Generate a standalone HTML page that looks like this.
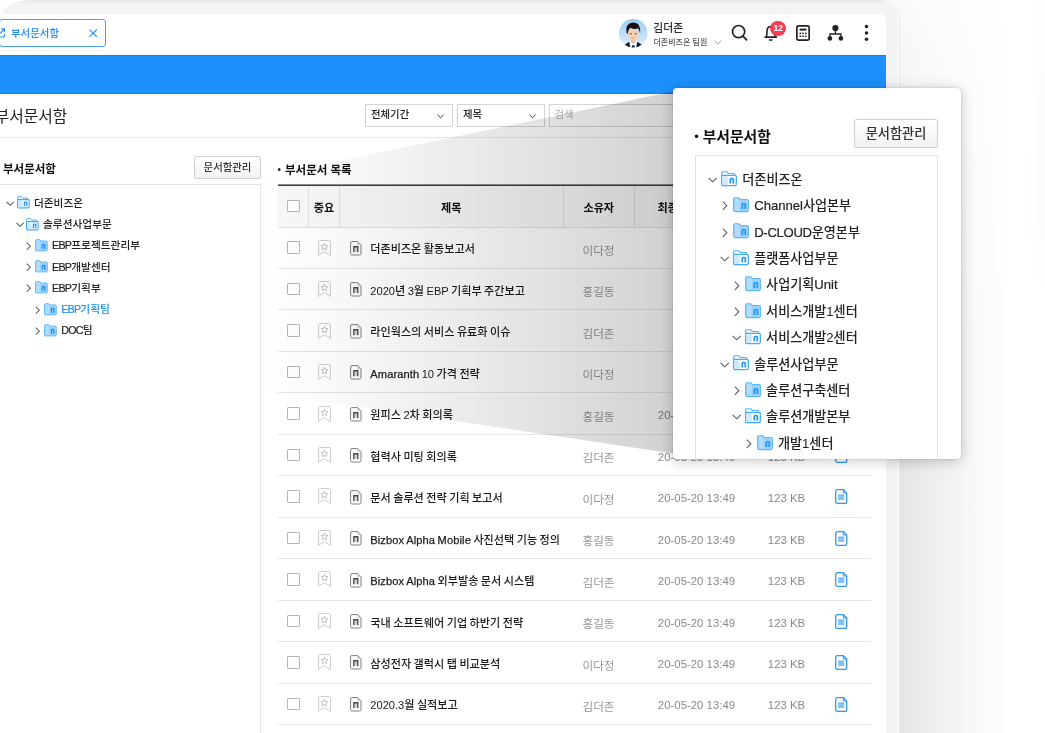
<!DOCTYPE html>
<html lang="ko">
<head>
<meta charset="utf-8">
<title>부서문서함</title>
<style>
*{box-sizing:border-box;margin:0;padding:0}
html,body{width:1045px;height:733px;overflow:hidden;background:#fff}
body{position:relative;font-family:"Liberation Sans","Noto Sans CJK KR",sans-serif;color:#222;font-size:11px}
.abs{position:absolute}
svg{display:block;overflow:visible}
/* page background */
#bg{left:0;top:0;width:1045px;height:733px;background:linear-gradient(180deg,rgba(255,255,255,0) 0,rgba(255,255,255,0) 180px,#fff 300px),linear-gradient(90deg,#fff 0,#fff 1028px,#f8f8f8 1045px)}
/* device frame */
#frameShadow{left:880px;top:0;width:165px;height:733px;background:linear-gradient(180deg,rgba(255,255,255,.8) 0,rgba(255,255,255,.55) 130px,rgba(255,255,255,0) 420px),linear-gradient(90deg,rgba(0,0,0,.105) 19px,rgba(0,0,0,.07) 50px,rgba(0,0,0,.035) 85px,rgba(0,0,0,.01) 118px,rgba(0,0,0,0) 132px)}
#frame{left:3px;top:0;width:897.2px;border-right:1px solid #e7e7e7;height:800px;background:linear-gradient(180deg,#e3e3e3 0,#eeeeee 2px,#f4f4f4 4.5px,#f3f3f3 14px);border-radius:30px 21px 0 0/14px 21px 0 0;box-shadow:inset -1.5px 0 0 #fbfbfb}
#screen{left:-10px;top:14px;width:896px;height:800px;background:#fff;border-radius:0 6.5px 0 0;overflow:hidden}
/* inside screen coordinates are offset by (-10,14): use wrapper */
#sc{left:10px;top:-14px;width:1045px;height:733px;will-change:transform}
.t{position:absolute;white-space:nowrap;line-height:1}
/* tab */
#tab{left:-1px;top:19px;width:107px;height:27.7px;border:1px solid #47a0f6;border-radius:3px}
/* blue bar */
#bar{left:-10px;top:55px;width:900px;height:38.8px;background:#1c90fb;box-shadow:inset 0 1px 0 #0c84f6, inset 0 -1px 0 #0a80f4}
/* selects */
.sel{height:23px;border:1px solid #d4d4d4;background:#fff;top:104px}
.btn{font-weight:500;border:1px solid #cfcfcf;background:linear-gradient(#fff,#f1f1f1);border-radius:2px;text-align:center;color:#333}
.line{background:#e8e8e8;height:1px}
/* tree */
.tbox{border:1px solid #e3e3e3;background:#fff}
/* table */
.row{position:absolute;left:278px;width:593px;height:41.5px;border-bottom:1px solid #e6e6e6}
.row .cb,.hcb{position:absolute;left:9px;top:13.9px;width:12.5px;height:12.5px;border:1px solid #b6b6b6;border-radius:1px;background:#fff}
.row .star{position:absolute;left:40px;top:12.1px}
.row .doc{position:absolute;left:71.8px;top:13.2px}
.row .ti{left:92.3px;top:16.7px;font-size:11.1px;font-weight:500;color:#1a1a1a;word-spacing:-.6px}
.row .ow{left:285px;width:71px;text-align:center;top:17.5px;font-size:11.6px;color:#969696}
.row .dt{left:356px;width:125px;text-align:center;top:16.7px;font-size:11.4px;color:#8a8a8a}
.row .sz{left:481px;width:55px;text-align:center;top:16.7px;font-size:11.4px;color:#8a8a8a}
.row .fi{position:absolute;left:557px;top:12.8px}
.la{letter-spacing:.1px;-webkit-text-stroke:.25px #1a1a1a}
.th{position:absolute;top:0;height:41px;font-weight:bold;font-size:11.1px;color:#111;text-align:center;line-height:44.6px;border-left:1px solid #e2e2e2}
/* popup */
#popup{left:673px;top:88px;width:287.8px;height:370.5px;background:#fff;border-radius:4px;box-shadow:0 2px 14px rgba(0,0,0,.22),0 0 1.5px rgba(0,0,0,.3);overflow:hidden}
</style>
</head>
<body>
<div id="bg" class="abs"></div>
<div id="frameShadow" class="abs"></div>
<div id="frame" class="abs"></div>
<div id="screen" class="abs"><div id="sc" class="abs">
<div id="tab" class="abs"></div>
<svg class="abs" style="left:-3.6px;top:28.4px" width="9" height="10" viewBox="0 0 9 10"><path d="M3.5 1H1.6Q.6 1 .6 2V8Q.6 9 1.6 9H7.4Q8.4 9 8.4 8V6" fill="none" stroke="#2a93f7" stroke-width="1.2"/><path d="M4 5.6L8.2 1.2M5.2 .8H8.4V4" fill="none" stroke="#2a93f7" stroke-width="1.2"/></svg>
<span class="t" style="left:11px;top:29.4px;font-size:10.45px;font-weight:500;color:#1f8df5">부서문서함</span>
<svg class="abs" style="left:89px;top:29.3px" width="8.4" height="8.4" viewBox="0 0 8.4 8.4"><path d="M.5 .5L7.9 7.9M7.9 .5L.5 7.9" stroke="#2a93f7" stroke-width="1.1"/></svg>
<svg class="abs" style="left:618.7px;top:19px" width="28.5" height="28.5" viewBox="0 0 28 28"><defs><clipPath id="av"><circle cx="14" cy="14" r="14"/></clipPath><linearGradient id="avg" x1="0" y1="0" x2="0" y2="1"><stop offset="0" stop-color="#9bcdf3"/><stop offset=".75" stop-color="#cfe6f8"/><stop offset="1" stop-color="#eef6fc"/></linearGradient></defs><circle cx="14" cy="14" r="14" fill="url(#avg)"/><g clip-path="url(#av)"><path d="M9.8 22.2L14 20.6L18.2 22.2L19 29H9Z" fill="#f5f8fc"/><path d="M3.6 28.4Q4.6 25 10.1 22.3L11.2 28.4Z" fill="#141a2c"/><path d="M24.4 28.4Q23.4 25 17.9 22.3L16.8 28.4Z" fill="#141a2c"/><path d="M12.9 25.9H15.1L15.8 28.5H12.2Z" fill="#1a2758"/><rect x="11.7" y="19" width="4.6" height="3.6" fill="#e6b996"/><path d="M11.7 22.4L14 24.6L16.3 22.4Z" fill="#e6b996"/><ellipse cx="14" cy="15" rx="5.4" ry="6.6" fill="#f3d1b6"/><path d="M7.6 14.2Q5.6 4.6 13.4 3.5Q21.8 3 20.7 14.2Q20.2 10.6 18.6 9.2Q14.6 10.6 11.4 8.6Q8.9 10 8.7 14.2Z" fill="#16110f"/><path d="M10.6 14.5H12.8M15.4 14.5H17.6" stroke="#5a4238" stroke-width=".9"/><path d="M12.3 18.3Q14 19.9 15.7 18.3Z" fill="#c77b7b"/></g></svg>
<span class="t" style="left:653.3px;top:22.9px;font-size:10.8px;font-weight:500;color:#2a2a2a">김더존</span>
<span class="t" style="left:653.5px;top:39.4px;font-size:8px;font-weight:500;color:#555">더존비즈온 팀원</span>
<div class="abs" style="left:714px;top:40px"><svg width="7.5" height="4.75" viewBox="0 0 9 5"><path d="M.6 .6L4.5 4.4L8.4 .6" fill="none" stroke="#777" stroke-width="0.9"/></svg></div>
<svg class="abs" style="left:731px;top:24px" width="18" height="18" viewBox="0 0 18 18"><circle cx="7.6" cy="7.6" r="6.1" fill="none" stroke="#222" stroke-width="1.7"/><path d="M11.9 12.1L15.6 15.9" stroke="#222" stroke-width="1.8" stroke-linecap="round"/></svg>
<svg class="abs" style="left:763px;top:24px" width="16" height="18" viewBox="0 0 16 18"><path d="M3.2 13Q4 11 4 7.4Q4 2.5 7.8 2.5Q11.6 2.5 11.6 7.4Q11.6 11 12.4 13" fill="none" stroke="#222" stroke-width="1.6"/><path d="M2 13.1H13.6" stroke="#222" stroke-width="1.6" stroke-linecap="round"/><path d="M6.5 15.9H8.9" stroke="#222" stroke-width="1.5" stroke-linecap="round"/></svg>
<div class="abs" style="left:770px;top:21px;width:16px;height:14.6px;border-radius:8px;background:#f63d52"></div>
<span class="t" style="left:770px;top:24px;width:16px;text-align:center;font-size:8.8px;font-weight:bold;color:#fff;letter-spacing:-.4px">12</span>
<svg class="abs" style="left:796px;top:25px" width="14" height="16" viewBox="0 0 14 16"><rect x=".85" y=".85" width="12.3" height="14.3" rx="1.6" fill="#fff" stroke="#222" stroke-width="1.7"/><rect x="3.6" y="3.6" width="6.8" height="2" fill="#222"/><g fill="#222"><rect x="3.5" y="7.6" width="1.6" height="1.5"/><rect x="6.2" y="7.6" width="1.6" height="1.5"/><rect x="8.9" y="7.6" width="1.6" height="1.5"/><rect x="3.5" y="10.5" width="1.6" height="1.5"/><rect x="6.2" y="10.5" width="1.6" height="1.5"/><rect x="8.9" y="10.5" width="1.6" height="1.5"/></g></svg>
<svg class="abs" style="left:827px;top:24px" width="17" height="18" viewBox="0 0 17 18"><circle cx="8.4" cy="4" r="3.1" fill="#222"/><path d="M8.4 6V10M2.9 13V10H13.9V13" fill="none" stroke="#222" stroke-width="1.3"/><circle cx="2.9" cy="14.4" r="2.3" fill="#222"/><circle cx="13.9" cy="14.4" r="2.3" fill="#222"/></svg>
<svg class="abs" style="left:864px;top:24px" width="5" height="18" viewBox="0 0 5 18"><circle cx="2.5" cy="2.6" r="1.75" fill="#222"/><circle cx="2.5" cy="8.9" r="1.75" fill="#222"/><circle cx="2.5" cy="15.2" r="1.75" fill="#222"/></svg>
<div id="bar" class="abs"></div>
<span class="t" style="left:-5.3px;top:108.7px;font-size:15.8px;color:#222">부서문서함</span>
<div class="abs line" style="left:-10px;top:136.5px;width:900px"></div>
<div class="abs sel" style="left:365px;width:88px"></div><span class="t" style="left:371px;top:110px;font-size:10.4px;font-weight:500;color:#222">전체기간</span><div class="abs" style="left:437px;top:113.5px"><svg width="7" height="4.5" viewBox="0 0 9 5"><path d="M.6 .6L4.5 4.4L8.4 .6" fill="none" stroke="#333" stroke-width="1.25"/></svg></div>
<div class="abs sel" style="left:456.5px;width:88px"></div><span class="t" style="left:463px;top:110px;font-size:10.4px;font-weight:500;color:#222">제목</span><div class="abs" style="left:529px;top:113.5px"><svg width="7" height="4.5" viewBox="0 0 9 5"><path d="M.6 .6L4.5 4.4L8.4 .6" fill="none" stroke="#333" stroke-width="1.25"/></svg></div>
<div class="abs sel" style="left:548.5px;width:200px"></div><span class="t" style="left:554.5px;top:110px;font-size:10.4px;color:#b0b0b0">검색</span>
<span class="t" style="left:3px;top:164.2px;font-size:11.5px;font-weight:bold;color:#111">부서문서함</span>
<div class="abs btn" style="left:194px;top:156px;width:67px;height:23px;font-size:10.4px;line-height:21px">문서함관리</div>
<div class="abs tbox" style="left:-10px;top:184px;width:271px;height:600px"></div>
<div class="abs" style="left:6.3px;top:200.7px"><svg width="8.3" height="5.15" viewBox="0 0 9 5"><path d="M.6 .6L4.5 4.4L8.4 .6" fill="none" stroke="#5a5a5a" stroke-width="1.1"/></svg></div><div class="abs" style="left:16.7px;top:196.4px"><svg width="12.8" height="12.6" viewBox="0 0 16 16" preserveAspectRatio="none"><path d="M.7 5V2Q.7 .8 1.9 .8H5.4Q6 .8 6.4 1.3L7.3 2.6H12.6Q13.8 2.6 13.8 3.8V5" fill="#fff" stroke="#4db1f9" stroke-width="1.25"/><path d="M1.9 4.6H14.1Q15.3 4.6 15.3 5.8V13.9Q15.3 15.1 14.1 15.1H1.9Q.7 15.1 .7 13.9V5.8Q.7 4.6 1.9 4.6Z" fill="#fff" stroke="#41abf9" stroke-width="1.3"/><rect x="1.4" y="5.6" width="5.4" height="8.8" fill="#cde8fd"/><path d="M9.3 12.9V8.7Q9.3 7.8 10.2 7.8H11.4Q12.3 7.8 12.3 8.7V12.9" fill="none" stroke="#2496f8" stroke-width="1.75"/></svg></div><span class="t" style="left:33.9px;top:197.8px;font-size:10.7px;font-weight:500;color:#222">더존비즈온</span>
<div class="abs" style="left:15.5px;top:222.1px"><svg width="8.3" height="5.15" viewBox="0 0 9 5"><path d="M.6 .6L4.5 4.4L8.4 .6" fill="none" stroke="#5a5a5a" stroke-width="1.1"/></svg></div><div class="abs" style="left:25.8px;top:217.8px"><svg width="12.8" height="12.6" viewBox="0 0 16 16" preserveAspectRatio="none"><path d="M.7 5V2Q.7 .8 1.9 .8H5.4Q6 .8 6.4 1.3L7.3 2.6H12.6Q13.8 2.6 13.8 3.8V5" fill="#fff" stroke="#4db1f9" stroke-width="1.25"/><path d="M1.9 4.6H14.1Q15.3 4.6 15.3 5.8V13.9Q15.3 15.1 14.1 15.1H1.9Q.7 15.1 .7 13.9V5.8Q.7 4.6 1.9 4.6Z" fill="#fff" stroke="#41abf9" stroke-width="1.3"/><rect x="1.4" y="5.6" width="5.4" height="8.8" fill="#cde8fd"/><path d="M9.3 12.9V8.7Q9.3 7.8 10.2 7.8H11.4Q12.3 7.8 12.3 8.7V12.9" fill="none" stroke="#2496f8" stroke-width="1.75"/></svg></div><span class="t" style="left:43.0px;top:219.2px;font-size:10.7px;font-weight:500;color:#222">솔루션사업부문</span>
<div class="abs" style="left:26.1px;top:241.8px"><svg width="5.15" height="8.3" viewBox="0 0 5 9"><path d="M.6 .6L4.4 4.5L.6 8.4" fill="none" stroke="#5a5a5a" stroke-width="1.1"/></svg></div><div class="abs" style="left:34.9px;top:239.0px"><svg width="12.8" height="12.6" viewBox="0 0 16 16" preserveAspectRatio="none"><path d="M1.9 .8H5.4Q6 .8 6.4 1.3L7.3 2.6H14.1Q15.3 2.6 15.3 3.8V13.9Q15.3 15.1 14.1 15.1H1.9Q.7 15.1 .7 13.9V2Q.7 .8 1.9 .8Z" fill="#b2dcfc" stroke="#5ab7f9" stroke-width="1.25"/><path d="M6.8 3.4H13.9Q14.6 3.4 14.6 4.1V13.7Q14.6 14.4 13.9 14.4H6.8Z" fill="#98cffb"/><path d="M9.3 12.5V7.9Q9.3 7 10.2 7H11.4Q12.3 7 12.3 7.9V12.5" fill="none" stroke="#2496f8" stroke-width="1.75"/></svg></div><span class="t" style="left:52.1px;top:240.4px;font-size:10.7px;font-weight:500;color:#222"><span style="letter-spacing:-0.75px;-webkit-text-stroke:.2px">EBP</span>프로젝트관리부</span>
<div class="abs" style="left:26.1px;top:263.1px"><svg width="5.15" height="8.3" viewBox="0 0 5 9"><path d="M.6 .6L4.4 4.5L.6 8.4" fill="none" stroke="#5a5a5a" stroke-width="1.1"/></svg></div><div class="abs" style="left:34.9px;top:260.3px"><svg width="12.8" height="12.6" viewBox="0 0 16 16" preserveAspectRatio="none"><path d="M1.9 .8H5.4Q6 .8 6.4 1.3L7.3 2.6H14.1Q15.3 2.6 15.3 3.8V13.9Q15.3 15.1 14.1 15.1H1.9Q.7 15.1 .7 13.9V2Q.7 .8 1.9 .8Z" fill="#b2dcfc" stroke="#5ab7f9" stroke-width="1.25"/><path d="M6.8 3.4H13.9Q14.6 3.4 14.6 4.1V13.7Q14.6 14.4 13.9 14.4H6.8Z" fill="#98cffb"/><path d="M9.3 12.5V7.9Q9.3 7 10.2 7H11.4Q12.3 7 12.3 7.9V12.5" fill="none" stroke="#2496f8" stroke-width="1.75"/></svg></div><span class="t" style="left:52.1px;top:261.6px;font-size:10.7px;font-weight:500;color:#222"><span style="letter-spacing:-0.75px;-webkit-text-stroke:.2px">EBP</span>개발센터</span>
<div class="abs" style="left:26.1px;top:284.2px"><svg width="5.15" height="8.3" viewBox="0 0 5 9"><path d="M.6 .6L4.4 4.5L.6 8.4" fill="none" stroke="#5a5a5a" stroke-width="1.1"/></svg></div><div class="abs" style="left:34.9px;top:281.4px"><svg width="12.8" height="12.6" viewBox="0 0 16 16" preserveAspectRatio="none"><path d="M1.9 .8H5.4Q6 .8 6.4 1.3L7.3 2.6H14.1Q15.3 2.6 15.3 3.8V13.9Q15.3 15.1 14.1 15.1H1.9Q.7 15.1 .7 13.9V2Q.7 .8 1.9 .8Z" fill="#b2dcfc" stroke="#5ab7f9" stroke-width="1.25"/><path d="M6.8 3.4H13.9Q14.6 3.4 14.6 4.1V13.7Q14.6 14.4 13.9 14.4H6.8Z" fill="#98cffb"/><path d="M9.3 12.5V7.9Q9.3 7 10.2 7H11.4Q12.3 7 12.3 7.9V12.5" fill="none" stroke="#2496f8" stroke-width="1.75"/></svg></div><span class="t" style="left:52.1px;top:282.8px;font-size:10.7px;font-weight:500;color:#222"><span style="letter-spacing:-0.75px;-webkit-text-stroke:.2px">EBP</span>기획부</span>
<div class="abs" style="left:35.2px;top:305.6px"><svg width="5.15" height="8.3" viewBox="0 0 5 9"><path d="M.6 .6L4.4 4.5L.6 8.4" fill="none" stroke="#5a5a5a" stroke-width="1.1"/></svg></div><div class="abs" style="left:44.0px;top:302.8px"><svg width="12.8" height="12.6" viewBox="0 0 16 16" preserveAspectRatio="none"><path d="M1.9 .8H5.4Q6 .8 6.4 1.3L7.3 2.6H14.1Q15.3 2.6 15.3 3.8V13.9Q15.3 15.1 14.1 15.1H1.9Q.7 15.1 .7 13.9V2Q.7 .8 1.9 .8Z" fill="#b2dcfc" stroke="#5ab7f9" stroke-width="1.25"/><path d="M6.8 3.4H13.9Q14.6 3.4 14.6 4.1V13.7Q14.6 14.4 13.9 14.4H6.8Z" fill="#98cffb"/><path d="M9.3 12.5V7.9Q9.3 7 10.2 7H11.4Q12.3 7 12.3 7.9V12.5" fill="none" stroke="#2496f8" stroke-width="1.75"/></svg></div><span class="t" style="left:61.2px;top:304.1px;font-size:10.7px;font-weight:500;color:#1f8df5"><span style="letter-spacing:-0.75px;-webkit-text-stroke:.2px">EBP</span>기획팀</span>
<div class="abs" style="left:35.2px;top:326.8px"><svg width="5.15" height="8.3" viewBox="0 0 5 9"><path d="M.6 .6L4.4 4.5L.6 8.4" fill="none" stroke="#5a5a5a" stroke-width="1.1"/></svg></div><div class="abs" style="left:44.0px;top:324.0px"><svg width="12.8" height="12.6" viewBox="0 0 16 16" preserveAspectRatio="none"><path d="M1.9 .8H5.4Q6 .8 6.4 1.3L7.3 2.6H14.1Q15.3 2.6 15.3 3.8V13.9Q15.3 15.1 14.1 15.1H1.9Q.7 15.1 .7 13.9V2Q.7 .8 1.9 .8Z" fill="#b2dcfc" stroke="#5ab7f9" stroke-width="1.25"/><path d="M6.8 3.4H13.9Q14.6 3.4 14.6 4.1V13.7Q14.6 14.4 13.9 14.4H6.8Z" fill="#98cffb"/><path d="M9.3 12.5V7.9Q9.3 7 10.2 7H11.4Q12.3 7 12.3 7.9V12.5" fill="none" stroke="#2496f8" stroke-width="1.75"/></svg></div><span class="t" style="left:61.2px;top:325.4px;font-size:10.7px;font-weight:500;color:#222"><span style="letter-spacing:-0.75px;-webkit-text-stroke:.2px">DOC</span>팀</span>
<span class="t" style="left:277.6px;top:165.3px;font-size:10px;color:#111">•</span><span class="t" style="left:285px;top:164.6px;font-size:11.5px;font-weight:bold;color:#111">부서문서 목록</span>
<div class="abs" style="left:278px;top:184px;width:593px;height:2px;background:linear-gradient(#8c8c8c 0,#8c8c8c 50%,#3f3f3f 50%,#3f3f3f 100%)"></div>
<div class="abs" style="left:278px;top:186px;width:593px;height:41.5px;background:#f8f8f8;border-bottom:1px solid #e2e2e2"><div class="hcb"></div><div class="th" style="left:30px;width:31px">중요</div><div class="th" style="left:61px;width:223.5px">제목</div><div class="th" style="left:284.5px;width:71.5px">소유자</div><div class="th" style="left:356px;width:125px;text-align:left;padding-left:22.5px">최종수정일</div><div class="th" style="left:481px;width:55px">크기</div><div class="th" style="left:536px;width:57px">파일</div></div>
<div class="row" style="top:227.50px"><div class="cb"></div><svg class="star" width="13" height="16.4" viewBox="0 0 13 16.4"><path d="M1.6 .5H11.4Q12.4 .5 12.4 1.5V15.4L6.5 11.6L.6 15.4V1.5Q.6 .5 1.6 .5Z" fill="none" stroke="#cdcdcd" stroke-width="1"/><path d="M6.5 3.3L7.5 5.4L9.8 5.7L8.1 7.3L8.5 9.6L6.5 8.5L4.5 9.6L4.9 7.3L3.2 5.7L5.5 5.4Z" fill="none" stroke="#b5b5b5" stroke-width=".9" stroke-linejoin="round"/></svg><svg class="doc" width="11.6" height="14.6" viewBox="0 0 11.6 14.6"><path d="M2 .6H7.8L11 3.8V12.6Q11 14 9.6 14H2Q.6 14 .6 12.6V2Q.6 .6 2 .6Z" fill="#fff" stroke="#7d7d7d" stroke-width="1"/><path d="M7.8 .9V3.8H10.8" fill="none" stroke="#b4b4b4" stroke-width=".8"/><rect x="4.4" y="6" width="2.8" height="4.8" fill="#cfcfcf"/><path d="M3.8 11.2V5.8H7.8V11.2" fill="none" stroke="#4a4a4a" stroke-width="1.35"/></svg><span class="t ti">더존비즈온 활동보고서</span><span class="t ow">이다정</span></div>
<div class="row" style="top:268.98px"><div class="cb"></div><svg class="star" width="13" height="16.4" viewBox="0 0 13 16.4"><path d="M1.6 .5H11.4Q12.4 .5 12.4 1.5V15.4L6.5 11.6L.6 15.4V1.5Q.6 .5 1.6 .5Z" fill="none" stroke="#cdcdcd" stroke-width="1"/><path d="M6.5 3.3L7.5 5.4L9.8 5.7L8.1 7.3L8.5 9.6L6.5 8.5L4.5 9.6L4.9 7.3L3.2 5.7L5.5 5.4Z" fill="none" stroke="#b5b5b5" stroke-width=".9" stroke-linejoin="round"/></svg><svg class="doc" width="11.6" height="14.6" viewBox="0 0 11.6 14.6"><path d="M2 .6H7.8L11 3.8V12.6Q11 14 9.6 14H2Q.6 14 .6 12.6V2Q.6 .6 2 .6Z" fill="#fff" stroke="#7d7d7d" stroke-width="1"/><path d="M7.8 .9V3.8H10.8" fill="none" stroke="#b4b4b4" stroke-width=".8"/><rect x="4.4" y="6" width="2.8" height="4.8" fill="#cfcfcf"/><path d="M3.8 11.2V5.8H7.8V11.2" fill="none" stroke="#4a4a4a" stroke-width="1.35"/></svg><span class="t ti">2020년 3월 EBP 기획부 주간보고</span><span class="t ow">홍길동</span></div>
<div class="row" style="top:310.46px"><div class="cb"></div><svg class="star" width="13" height="16.4" viewBox="0 0 13 16.4"><path d="M1.6 .5H11.4Q12.4 .5 12.4 1.5V15.4L6.5 11.6L.6 15.4V1.5Q.6 .5 1.6 .5Z" fill="none" stroke="#cdcdcd" stroke-width="1"/><path d="M6.5 3.3L7.5 5.4L9.8 5.7L8.1 7.3L8.5 9.6L6.5 8.5L4.5 9.6L4.9 7.3L3.2 5.7L5.5 5.4Z" fill="none" stroke="#b5b5b5" stroke-width=".9" stroke-linejoin="round"/></svg><svg class="doc" width="11.6" height="14.6" viewBox="0 0 11.6 14.6"><path d="M2 .6H7.8L11 3.8V12.6Q11 14 9.6 14H2Q.6 14 .6 12.6V2Q.6 .6 2 .6Z" fill="#fff" stroke="#7d7d7d" stroke-width="1"/><path d="M7.8 .9V3.8H10.8" fill="none" stroke="#b4b4b4" stroke-width=".8"/><rect x="4.4" y="6" width="2.8" height="4.8" fill="#cfcfcf"/><path d="M3.8 11.2V5.8H7.8V11.2" fill="none" stroke="#4a4a4a" stroke-width="1.35"/></svg><span class="t ti">라인웍스의 서비스 유료화 이슈</span><span class="t ow">김더존</span></div>
<div class="row" style="top:351.94px"><div class="cb"></div><svg class="star" width="13" height="16.4" viewBox="0 0 13 16.4"><path d="M1.6 .5H11.4Q12.4 .5 12.4 1.5V15.4L6.5 11.6L.6 15.4V1.5Q.6 .5 1.6 .5Z" fill="none" stroke="#cdcdcd" stroke-width="1"/><path d="M6.5 3.3L7.5 5.4L9.8 5.7L8.1 7.3L8.5 9.6L6.5 8.5L4.5 9.6L4.9 7.3L3.2 5.7L5.5 5.4Z" fill="none" stroke="#b5b5b5" stroke-width=".9" stroke-linejoin="round"/></svg><svg class="doc" width="11.6" height="14.6" viewBox="0 0 11.6 14.6"><path d="M2 .6H7.8L11 3.8V12.6Q11 14 9.6 14H2Q.6 14 .6 12.6V2Q.6 .6 2 .6Z" fill="#fff" stroke="#7d7d7d" stroke-width="1"/><path d="M7.8 .9V3.8H10.8" fill="none" stroke="#b4b4b4" stroke-width=".8"/><rect x="4.4" y="6" width="2.8" height="4.8" fill="#cfcfcf"/><path d="M3.8 11.2V5.8H7.8V11.2" fill="none" stroke="#4a4a4a" stroke-width="1.35"/></svg><span class="t ti"><span class="la">Amaranth</span> 10 가격 전략</span><span class="t ow">이다정</span></div>
<div class="row" style="top:393.42px"><div class="cb"></div><svg class="star" width="13" height="16.4" viewBox="0 0 13 16.4"><path d="M1.6 .5H11.4Q12.4 .5 12.4 1.5V15.4L6.5 11.6L.6 15.4V1.5Q.6 .5 1.6 .5Z" fill="none" stroke="#cdcdcd" stroke-width="1"/><path d="M6.5 3.3L7.5 5.4L9.8 5.7L8.1 7.3L8.5 9.6L6.5 8.5L4.5 9.6L4.9 7.3L3.2 5.7L5.5 5.4Z" fill="none" stroke="#b5b5b5" stroke-width=".9" stroke-linejoin="round"/></svg><svg class="doc" width="11.6" height="14.6" viewBox="0 0 11.6 14.6"><path d="M2 .6H7.8L11 3.8V12.6Q11 14 9.6 14H2Q.6 14 .6 12.6V2Q.6 .6 2 .6Z" fill="#fff" stroke="#7d7d7d" stroke-width="1"/><path d="M7.8 .9V3.8H10.8" fill="none" stroke="#b4b4b4" stroke-width=".8"/><rect x="4.4" y="6" width="2.8" height="4.8" fill="#cfcfcf"/><path d="M3.8 11.2V5.8H7.8V11.2" fill="none" stroke="#4a4a4a" stroke-width="1.35"/></svg><span class="t ti">원피스 2차 회의록</span><span class="t ow">홍길동</span><span class="t dt">20-05-20 13:49</span><span class="t sz">123 KB</span><svg class="fi" width="12.4" height="15" viewBox="0 0 12.4 15"><path d="M2.6 .7H8.3L11.7 4.1V12.4Q11.7 14.3 9.8 14.3H2.6Q.7 14.3 .7 12.4V2.6Q.7 .7 2.6 .7Z" fill="#fff" stroke="#2f98f8" stroke-width="1.3"/><path d="M8.3 .9V4.1H11.5" fill="none" stroke="#2f98f8" stroke-width="1"/><rect x="3.2" y="5.4" width="6" height="5.6" fill="#a9d4fc"/><path d="M3.2 6.3H9.2M3.2 8.2H9.2M3.2 10.1H9.2" stroke="#5fb0fa" stroke-width="1"/></svg></div>
<div class="row" style="top:434.90px"><div class="cb"></div><svg class="star" width="13" height="16.4" viewBox="0 0 13 16.4"><path d="M1.6 .5H11.4Q12.4 .5 12.4 1.5V15.4L6.5 11.6L.6 15.4V1.5Q.6 .5 1.6 .5Z" fill="none" stroke="#cdcdcd" stroke-width="1"/><path d="M6.5 3.3L7.5 5.4L9.8 5.7L8.1 7.3L8.5 9.6L6.5 8.5L4.5 9.6L4.9 7.3L3.2 5.7L5.5 5.4Z" fill="none" stroke="#b5b5b5" stroke-width=".9" stroke-linejoin="round"/></svg><svg class="doc" width="11.6" height="14.6" viewBox="0 0 11.6 14.6"><path d="M2 .6H7.8L11 3.8V12.6Q11 14 9.6 14H2Q.6 14 .6 12.6V2Q.6 .6 2 .6Z" fill="#fff" stroke="#7d7d7d" stroke-width="1"/><path d="M7.8 .9V3.8H10.8" fill="none" stroke="#b4b4b4" stroke-width=".8"/><rect x="4.4" y="6" width="2.8" height="4.8" fill="#cfcfcf"/><path d="M3.8 11.2V5.8H7.8V11.2" fill="none" stroke="#4a4a4a" stroke-width="1.35"/></svg><span class="t ti">협력사 미팅 회의록</span><span class="t ow">김더존</span><span class="t dt">20-05-20 13:49</span><span class="t sz">123 KB</span><svg class="fi" width="12.4" height="15" viewBox="0 0 12.4 15"><path d="M2.6 .7H8.3L11.7 4.1V12.4Q11.7 14.3 9.8 14.3H2.6Q.7 14.3 .7 12.4V2.6Q.7 .7 2.6 .7Z" fill="#fff" stroke="#2f98f8" stroke-width="1.3"/><path d="M8.3 .9V4.1H11.5" fill="none" stroke="#2f98f8" stroke-width="1"/><rect x="3.2" y="5.4" width="6" height="5.6" fill="#a9d4fc"/><path d="M3.2 6.3H9.2M3.2 8.2H9.2M3.2 10.1H9.2" stroke="#5fb0fa" stroke-width="1"/></svg></div>
<div class="row" style="top:476.38px"><div class="cb"></div><svg class="star" width="13" height="16.4" viewBox="0 0 13 16.4"><path d="M1.6 .5H11.4Q12.4 .5 12.4 1.5V15.4L6.5 11.6L.6 15.4V1.5Q.6 .5 1.6 .5Z" fill="none" stroke="#cdcdcd" stroke-width="1"/><path d="M6.5 3.3L7.5 5.4L9.8 5.7L8.1 7.3L8.5 9.6L6.5 8.5L4.5 9.6L4.9 7.3L3.2 5.7L5.5 5.4Z" fill="none" stroke="#b5b5b5" stroke-width=".9" stroke-linejoin="round"/></svg><svg class="doc" width="11.6" height="14.6" viewBox="0 0 11.6 14.6"><path d="M2 .6H7.8L11 3.8V12.6Q11 14 9.6 14H2Q.6 14 .6 12.6V2Q.6 .6 2 .6Z" fill="#fff" stroke="#7d7d7d" stroke-width="1"/><path d="M7.8 .9V3.8H10.8" fill="none" stroke="#b4b4b4" stroke-width=".8"/><rect x="4.4" y="6" width="2.8" height="4.8" fill="#cfcfcf"/><path d="M3.8 11.2V5.8H7.8V11.2" fill="none" stroke="#4a4a4a" stroke-width="1.35"/></svg><span class="t ti">문서 솔루션 전략 기획 보고서</span><span class="t ow">이다정</span><span class="t dt">20-05-20 13:49</span><span class="t sz">123 KB</span><svg class="fi" width="12.4" height="15" viewBox="0 0 12.4 15"><path d="M2.6 .7H8.3L11.7 4.1V12.4Q11.7 14.3 9.8 14.3H2.6Q.7 14.3 .7 12.4V2.6Q.7 .7 2.6 .7Z" fill="#fff" stroke="#2f98f8" stroke-width="1.3"/><path d="M8.3 .9V4.1H11.5" fill="none" stroke="#2f98f8" stroke-width="1"/><rect x="3.2" y="5.4" width="6" height="5.6" fill="#a9d4fc"/><path d="M3.2 6.3H9.2M3.2 8.2H9.2M3.2 10.1H9.2" stroke="#5fb0fa" stroke-width="1"/></svg></div>
<div class="row" style="top:517.86px"><div class="cb"></div><svg class="star" width="13" height="16.4" viewBox="0 0 13 16.4"><path d="M1.6 .5H11.4Q12.4 .5 12.4 1.5V15.4L6.5 11.6L.6 15.4V1.5Q.6 .5 1.6 .5Z" fill="none" stroke="#cdcdcd" stroke-width="1"/><path d="M6.5 3.3L7.5 5.4L9.8 5.7L8.1 7.3L8.5 9.6L6.5 8.5L4.5 9.6L4.9 7.3L3.2 5.7L5.5 5.4Z" fill="none" stroke="#b5b5b5" stroke-width=".9" stroke-linejoin="round"/></svg><svg class="doc" width="11.6" height="14.6" viewBox="0 0 11.6 14.6"><path d="M2 .6H7.8L11 3.8V12.6Q11 14 9.6 14H2Q.6 14 .6 12.6V2Q.6 .6 2 .6Z" fill="#fff" stroke="#7d7d7d" stroke-width="1"/><path d="M7.8 .9V3.8H10.8" fill="none" stroke="#b4b4b4" stroke-width=".8"/><rect x="4.4" y="6" width="2.8" height="4.8" fill="#cfcfcf"/><path d="M3.8 11.2V5.8H7.8V11.2" fill="none" stroke="#4a4a4a" stroke-width="1.35"/></svg><span class="t ti"><span class="la">Bizbox Alpha Mobile</span> 사진선택 기능 정의</span><span class="t ow">홍길동</span><span class="t dt">20-05-20 13:49</span><span class="t sz">123 KB</span><svg class="fi" width="12.4" height="15" viewBox="0 0 12.4 15"><path d="M2.6 .7H8.3L11.7 4.1V12.4Q11.7 14.3 9.8 14.3H2.6Q.7 14.3 .7 12.4V2.6Q.7 .7 2.6 .7Z" fill="#fff" stroke="#2f98f8" stroke-width="1.3"/><path d="M8.3 .9V4.1H11.5" fill="none" stroke="#2f98f8" stroke-width="1"/><rect x="3.2" y="5.4" width="6" height="5.6" fill="#a9d4fc"/><path d="M3.2 6.3H9.2M3.2 8.2H9.2M3.2 10.1H9.2" stroke="#5fb0fa" stroke-width="1"/></svg></div>
<div class="row" style="top:559.34px"><div class="cb"></div><svg class="star" width="13" height="16.4" viewBox="0 0 13 16.4"><path d="M1.6 .5H11.4Q12.4 .5 12.4 1.5V15.4L6.5 11.6L.6 15.4V1.5Q.6 .5 1.6 .5Z" fill="none" stroke="#cdcdcd" stroke-width="1"/><path d="M6.5 3.3L7.5 5.4L9.8 5.7L8.1 7.3L8.5 9.6L6.5 8.5L4.5 9.6L4.9 7.3L3.2 5.7L5.5 5.4Z" fill="none" stroke="#b5b5b5" stroke-width=".9" stroke-linejoin="round"/></svg><svg class="doc" width="11.6" height="14.6" viewBox="0 0 11.6 14.6"><path d="M2 .6H7.8L11 3.8V12.6Q11 14 9.6 14H2Q.6 14 .6 12.6V2Q.6 .6 2 .6Z" fill="#fff" stroke="#7d7d7d" stroke-width="1"/><path d="M7.8 .9V3.8H10.8" fill="none" stroke="#b4b4b4" stroke-width=".8"/><rect x="4.4" y="6" width="2.8" height="4.8" fill="#cfcfcf"/><path d="M3.8 11.2V5.8H7.8V11.2" fill="none" stroke="#4a4a4a" stroke-width="1.35"/></svg><span class="t ti"><span class="la">Bizbox Alpha</span> 외부발송 문서 시스템</span><span class="t ow">김더존</span><span class="t dt">20-05-20 13:49</span><span class="t sz">123 KB</span><svg class="fi" width="12.4" height="15" viewBox="0 0 12.4 15"><path d="M2.6 .7H8.3L11.7 4.1V12.4Q11.7 14.3 9.8 14.3H2.6Q.7 14.3 .7 12.4V2.6Q.7 .7 2.6 .7Z" fill="#fff" stroke="#2f98f8" stroke-width="1.3"/><path d="M8.3 .9V4.1H11.5" fill="none" stroke="#2f98f8" stroke-width="1"/><rect x="3.2" y="5.4" width="6" height="5.6" fill="#a9d4fc"/><path d="M3.2 6.3H9.2M3.2 8.2H9.2M3.2 10.1H9.2" stroke="#5fb0fa" stroke-width="1"/></svg></div>
<div class="row" style="top:600.82px"><div class="cb"></div><svg class="star" width="13" height="16.4" viewBox="0 0 13 16.4"><path d="M1.6 .5H11.4Q12.4 .5 12.4 1.5V15.4L6.5 11.6L.6 15.4V1.5Q.6 .5 1.6 .5Z" fill="none" stroke="#cdcdcd" stroke-width="1"/><path d="M6.5 3.3L7.5 5.4L9.8 5.7L8.1 7.3L8.5 9.6L6.5 8.5L4.5 9.6L4.9 7.3L3.2 5.7L5.5 5.4Z" fill="none" stroke="#b5b5b5" stroke-width=".9" stroke-linejoin="round"/></svg><svg class="doc" width="11.6" height="14.6" viewBox="0 0 11.6 14.6"><path d="M2 .6H7.8L11 3.8V12.6Q11 14 9.6 14H2Q.6 14 .6 12.6V2Q.6 .6 2 .6Z" fill="#fff" stroke="#7d7d7d" stroke-width="1"/><path d="M7.8 .9V3.8H10.8" fill="none" stroke="#b4b4b4" stroke-width=".8"/><rect x="4.4" y="6" width="2.8" height="4.8" fill="#cfcfcf"/><path d="M3.8 11.2V5.8H7.8V11.2" fill="none" stroke="#4a4a4a" stroke-width="1.35"/></svg><span class="t ti">국내 소프트웨어 기업 하반기 전략</span><span class="t ow">홍길동</span><span class="t dt">20-05-20 13:49</span><span class="t sz">123 KB</span><svg class="fi" width="12.4" height="15" viewBox="0 0 12.4 15"><path d="M2.6 .7H8.3L11.7 4.1V12.4Q11.7 14.3 9.8 14.3H2.6Q.7 14.3 .7 12.4V2.6Q.7 .7 2.6 .7Z" fill="#fff" stroke="#2f98f8" stroke-width="1.3"/><path d="M8.3 .9V4.1H11.5" fill="none" stroke="#2f98f8" stroke-width="1"/><rect x="3.2" y="5.4" width="6" height="5.6" fill="#a9d4fc"/><path d="M3.2 6.3H9.2M3.2 8.2H9.2M3.2 10.1H9.2" stroke="#5fb0fa" stroke-width="1"/></svg></div>
<div class="row" style="top:642.30px"><div class="cb"></div><svg class="star" width="13" height="16.4" viewBox="0 0 13 16.4"><path d="M1.6 .5H11.4Q12.4 .5 12.4 1.5V15.4L6.5 11.6L.6 15.4V1.5Q.6 .5 1.6 .5Z" fill="none" stroke="#cdcdcd" stroke-width="1"/><path d="M6.5 3.3L7.5 5.4L9.8 5.7L8.1 7.3L8.5 9.6L6.5 8.5L4.5 9.6L4.9 7.3L3.2 5.7L5.5 5.4Z" fill="none" stroke="#b5b5b5" stroke-width=".9" stroke-linejoin="round"/></svg><svg class="doc" width="11.6" height="14.6" viewBox="0 0 11.6 14.6"><path d="M2 .6H7.8L11 3.8V12.6Q11 14 9.6 14H2Q.6 14 .6 12.6V2Q.6 .6 2 .6Z" fill="#fff" stroke="#7d7d7d" stroke-width="1"/><path d="M7.8 .9V3.8H10.8" fill="none" stroke="#b4b4b4" stroke-width=".8"/><rect x="4.4" y="6" width="2.8" height="4.8" fill="#cfcfcf"/><path d="M3.8 11.2V5.8H7.8V11.2" fill="none" stroke="#4a4a4a" stroke-width="1.35"/></svg><span class="t ti">삼성전자 갤럭시 탭 비교분석</span><span class="t ow">이다정</span><span class="t dt">20-05-20 13:49</span><span class="t sz">123 KB</span><svg class="fi" width="12.4" height="15" viewBox="0 0 12.4 15"><path d="M2.6 .7H8.3L11.7 4.1V12.4Q11.7 14.3 9.8 14.3H2.6Q.7 14.3 .7 12.4V2.6Q.7 .7 2.6 .7Z" fill="#fff" stroke="#2f98f8" stroke-width="1.3"/><path d="M8.3 .9V4.1H11.5" fill="none" stroke="#2f98f8" stroke-width="1"/><rect x="3.2" y="5.4" width="6" height="5.6" fill="#a9d4fc"/><path d="M3.2 6.3H9.2M3.2 8.2H9.2M3.2 10.1H9.2" stroke="#5fb0fa" stroke-width="1"/></svg></div>
<div class="row" style="top:683.78px"><div class="cb"></div><svg class="star" width="13" height="16.4" viewBox="0 0 13 16.4"><path d="M1.6 .5H11.4Q12.4 .5 12.4 1.5V15.4L6.5 11.6L.6 15.4V1.5Q.6 .5 1.6 .5Z" fill="none" stroke="#cdcdcd" stroke-width="1"/><path d="M6.5 3.3L7.5 5.4L9.8 5.7L8.1 7.3L8.5 9.6L6.5 8.5L4.5 9.6L4.9 7.3L3.2 5.7L5.5 5.4Z" fill="none" stroke="#b5b5b5" stroke-width=".9" stroke-linejoin="round"/></svg><svg class="doc" width="11.6" height="14.6" viewBox="0 0 11.6 14.6"><path d="M2 .6H7.8L11 3.8V12.6Q11 14 9.6 14H2Q.6 14 .6 12.6V2Q.6 .6 2 .6Z" fill="#fff" stroke="#7d7d7d" stroke-width="1"/><path d="M7.8 .9V3.8H10.8" fill="none" stroke="#b4b4b4" stroke-width=".8"/><rect x="4.4" y="6" width="2.8" height="4.8" fill="#cfcfcf"/><path d="M3.8 11.2V5.8H7.8V11.2" fill="none" stroke="#4a4a4a" stroke-width="1.35"/></svg><span class="t ti">2020.3월 실적보고</span><span class="t ow">김더존</span><span class="t dt">20-05-20 13:49</span><span class="t sz">123 KB</span><svg class="fi" width="12.4" height="15" viewBox="0 0 12.4 15"><path d="M2.6 .7H8.3L11.7 4.1V12.4Q11.7 14.3 9.8 14.3H2.6Q.7 14.3 .7 12.4V2.6Q.7 .7 2.6 .7Z" fill="#fff" stroke="#2f98f8" stroke-width="1.3"/><path d="M8.3 .9V4.1H11.5" fill="none" stroke="#2f98f8" stroke-width="1"/><rect x="3.2" y="5.4" width="6" height="5.6" fill="#a9d4fc"/><path d="M3.2 6.3H9.2M3.2 8.2H9.2M3.2 10.1H9.2" stroke="#5fb0fa" stroke-width="1"/></svg></div>
<div class="row" style="top:725.26px"></div>
</div></div>
<div class="abs" style="left:262px;top:85px;width:411px;height:380px;background:linear-gradient(90deg,rgba(0,0,0,0) 0,rgba(0,0,0,.015) 12%,rgba(0,0,0,.05) 34%,rgba(0,0,0,.115) 68%,rgba(0,0,0,.18) 100%);clip-path:polygon(0 92px,100% 6.5px,100% 368.5px,0 307px)"></div>
<div id="popup" class="abs">
<span class="t" style="left:21.2px;top:42.2px;font-size:13px;color:#111">•</span><span class="t" style="left:29.7px;top:41.5px;font-size:14.8px;font-weight:bold;color:#111">부서문서함</span>
<div class="abs btn" style="left:181px;top:31px;width:84px;height:29px;font-size:13.2px;line-height:27px;border-radius:2.5px">문서함관리</div>
<div class="abs tbox" style="left:22px;top:67px;width:243px;height:400px"></div>
<div class="abs" style="left:35.0px;top:88.8px"><svg width="9.4" height="5.7" viewBox="0 0 9 5"><path d="M.6 .6L4.5 4.4L8.4 .6" fill="none" stroke="#5a5a5a" stroke-width="1.0"/></svg></div><div class="abs" style="left:48.2px;top:82.6px"><svg width="16" height="15.4" viewBox="0 0 16 16" preserveAspectRatio="none"><path d="M.7 5V2Q.7 .8 1.9 .8H5.4Q6 .8 6.4 1.3L7.3 2.6H12.6Q13.8 2.6 13.8 3.8V5" fill="#fff" stroke="#4db1f9" stroke-width="1.25"/><path d="M1.9 4.6H14.1Q15.3 4.6 15.3 5.8V13.9Q15.3 15.1 14.1 15.1H1.9Q.7 15.1 .7 13.9V5.8Q.7 4.6 1.9 4.6Z" fill="#fff" stroke="#41abf9" stroke-width="1.3"/><rect x="1.4" y="5.6" width="5.4" height="8.8" fill="#cde8fd"/><path d="M9.3 12.9V8.7Q9.3 7.8 10.2 7.8H11.4Q12.3 7.8 12.3 8.7V12.9" fill="none" stroke="#2496f8" stroke-width="1.75"/></svg></div><span class="t" style="left:69.3px;top:84.8px;font-size:13.1px;font-weight:500;color:#222">더존비즈온</span>
<div class="abs" style="left:48.8px;top:113.3px"><svg width="5.7" height="9.4" viewBox="0 0 5 9"><path d="M.6 .6L4.4 4.5L.6 8.4" fill="none" stroke="#5a5a5a" stroke-width="1.0"/></svg></div><div class="abs" style="left:60.1px;top:109.0px"><svg width="16" height="15.4" viewBox="0 0 16 16" preserveAspectRatio="none"><path d="M1.9 .8H5.4Q6 .8 6.4 1.3L7.3 2.6H14.1Q15.3 2.6 15.3 3.8V13.9Q15.3 15.1 14.1 15.1H1.9Q.7 15.1 .7 13.9V2Q.7 .8 1.9 .8Z" fill="#b2dcfc" stroke="#5ab7f9" stroke-width="1.25"/><path d="M6.8 3.4H13.9Q14.6 3.4 14.6 4.1V13.7Q14.6 14.4 13.9 14.4H6.8Z" fill="#98cffb"/><path d="M9.3 12.5V7.9Q9.3 7 10.2 7H11.4Q12.3 7 12.3 7.9V12.5" fill="none" stroke="#2496f8" stroke-width="1.75"/></svg></div><span class="t" style="left:81.2px;top:111.2px;font-size:13.1px;font-weight:500;color:#222"><span style="-webkit-text-stroke:.2px">Channel</span>사업본부</span>
<div class="abs" style="left:48.8px;top:139.7px"><svg width="5.7" height="9.4" viewBox="0 0 5 9"><path d="M.6 .6L4.4 4.5L.6 8.4" fill="none" stroke="#5a5a5a" stroke-width="1.0"/></svg></div><div class="abs" style="left:60.1px;top:135.4px"><svg width="16" height="15.4" viewBox="0 0 16 16" preserveAspectRatio="none"><path d="M1.9 .8H5.4Q6 .8 6.4 1.3L7.3 2.6H14.1Q15.3 2.6 15.3 3.8V13.9Q15.3 15.1 14.1 15.1H1.9Q.7 15.1 .7 13.9V2Q.7 .8 1.9 .8Z" fill="#b2dcfc" stroke="#5ab7f9" stroke-width="1.25"/><path d="M6.8 3.4H13.9Q14.6 3.4 14.6 4.1V13.7Q14.6 14.4 13.9 14.4H6.8Z" fill="#98cffb"/><path d="M9.3 12.5V7.9Q9.3 7 10.2 7H11.4Q12.3 7 12.3 7.9V12.5" fill="none" stroke="#2496f8" stroke-width="1.75"/></svg></div><span class="t" style="left:81.2px;top:137.6px;font-size:13.1px;font-weight:500;color:#222"><span style="letter-spacing:-0.3px;-webkit-text-stroke:.2px">D-CLOUD</span>운영본부</span>
<div class="abs" style="left:46.9px;top:167.9px"><svg width="9.4" height="5.7" viewBox="0 0 9 5"><path d="M.6 .6L4.5 4.4L8.4 .6" fill="none" stroke="#5a5a5a" stroke-width="1.0"/></svg></div><div class="abs" style="left:60.1px;top:161.8px"><svg width="16" height="15.4" viewBox="0 0 16 16" preserveAspectRatio="none"><path d="M.7 5V2Q.7 .8 1.9 .8H5.4Q6 .8 6.4 1.3L7.3 2.6H12.6Q13.8 2.6 13.8 3.8V5" fill="#fff" stroke="#4db1f9" stroke-width="1.25"/><path d="M1.9 4.6H14.1Q15.3 4.6 15.3 5.8V13.9Q15.3 15.1 14.1 15.1H1.9Q.7 15.1 .7 13.9V5.8Q.7 4.6 1.9 4.6Z" fill="#fff" stroke="#41abf9" stroke-width="1.3"/><rect x="1.4" y="5.6" width="5.4" height="8.8" fill="#cde8fd"/><path d="M9.3 12.9V8.7Q9.3 7.8 10.2 7.8H11.4Q12.3 7.8 12.3 8.7V12.9" fill="none" stroke="#2496f8" stroke-width="1.75"/></svg></div><span class="t" style="left:81.2px;top:164.0px;font-size:13.1px;font-weight:500;color:#222">플랫폼사업부문</span>
<div class="abs" style="left:60.7px;top:192.5px"><svg width="5.7" height="9.4" viewBox="0 0 5 9"><path d="M.6 .6L4.4 4.5L.6 8.4" fill="none" stroke="#5a5a5a" stroke-width="1.0"/></svg></div><div class="abs" style="left:72.0px;top:188.2px"><svg width="16" height="15.4" viewBox="0 0 16 16" preserveAspectRatio="none"><path d="M1.9 .8H5.4Q6 .8 6.4 1.3L7.3 2.6H14.1Q15.3 2.6 15.3 3.8V13.9Q15.3 15.1 14.1 15.1H1.9Q.7 15.1 .7 13.9V2Q.7 .8 1.9 .8Z" fill="#b2dcfc" stroke="#5ab7f9" stroke-width="1.25"/><path d="M6.8 3.4H13.9Q14.6 3.4 14.6 4.1V13.7Q14.6 14.4 13.9 14.4H6.8Z" fill="#98cffb"/><path d="M9.3 12.5V7.9Q9.3 7 10.2 7H11.4Q12.3 7 12.3 7.9V12.5" fill="none" stroke="#2496f8" stroke-width="1.75"/></svg></div><span class="t" style="left:93.1px;top:190.4px;font-size:13.1px;font-weight:500;color:#222">사업기획<span style="-webkit-text-stroke:.2px">Unit</span></span>
<div class="abs" style="left:60.7px;top:218.9px"><svg width="5.7" height="9.4" viewBox="0 0 5 9"><path d="M.6 .6L4.4 4.5L.6 8.4" fill="none" stroke="#5a5a5a" stroke-width="1.0"/></svg></div><div class="abs" style="left:72.0px;top:214.6px"><svg width="16" height="15.4" viewBox="0 0 16 16" preserveAspectRatio="none"><path d="M1.9 .8H5.4Q6 .8 6.4 1.3L7.3 2.6H14.1Q15.3 2.6 15.3 3.8V13.9Q15.3 15.1 14.1 15.1H1.9Q.7 15.1 .7 13.9V2Q.7 .8 1.9 .8Z" fill="#b2dcfc" stroke="#5ab7f9" stroke-width="1.25"/><path d="M6.8 3.4H13.9Q14.6 3.4 14.6 4.1V13.7Q14.6 14.4 13.9 14.4H6.8Z" fill="#98cffb"/><path d="M9.3 12.5V7.9Q9.3 7 10.2 7H11.4Q12.3 7 12.3 7.9V12.5" fill="none" stroke="#2496f8" stroke-width="1.75"/></svg></div><span class="t" style="left:93.1px;top:216.8px;font-size:13.1px;font-weight:500;color:#222">서비스개발1센터</span>
<div class="abs" style="left:58.8px;top:247.1px"><svg width="9.4" height="5.7" viewBox="0 0 9 5"><path d="M.6 .6L4.5 4.4L8.4 .6" fill="none" stroke="#5a5a5a" stroke-width="1.0"/></svg></div><div class="abs" style="left:72.0px;top:241.0px"><svg width="16" height="15.4" viewBox="0 0 16 16" preserveAspectRatio="none"><path d="M.7 5V2Q.7 .8 1.9 .8H5.4Q6 .8 6.4 1.3L7.3 2.6H12.6Q13.8 2.6 13.8 3.8V5" fill="#fff" stroke="#4db1f9" stroke-width="1.25"/><path d="M1.9 4.6H14.1Q15.3 4.6 15.3 5.8V13.9Q15.3 15.1 14.1 15.1H1.9Q.7 15.1 .7 13.9V5.8Q.7 4.6 1.9 4.6Z" fill="#fff" stroke="#41abf9" stroke-width="1.3"/><rect x="1.4" y="5.6" width="5.4" height="8.8" fill="#cde8fd"/><path d="M9.3 12.9V8.7Q9.3 7.8 10.2 7.8H11.4Q12.3 7.8 12.3 8.7V12.9" fill="none" stroke="#2496f8" stroke-width="1.75"/></svg></div><span class="t" style="left:93.1px;top:243.2px;font-size:13.1px;font-weight:500;color:#222">서비스개발2센터</span>
<div class="abs" style="left:46.9px;top:273.5px"><svg width="9.4" height="5.7" viewBox="0 0 9 5"><path d="M.6 .6L4.5 4.4L8.4 .6" fill="none" stroke="#5a5a5a" stroke-width="1.0"/></svg></div><div class="abs" style="left:60.1px;top:267.4px"><svg width="16" height="15.4" viewBox="0 0 16 16" preserveAspectRatio="none"><path d="M.7 5V2Q.7 .8 1.9 .8H5.4Q6 .8 6.4 1.3L7.3 2.6H12.6Q13.8 2.6 13.8 3.8V5" fill="#fff" stroke="#4db1f9" stroke-width="1.25"/><path d="M1.9 4.6H14.1Q15.3 4.6 15.3 5.8V13.9Q15.3 15.1 14.1 15.1H1.9Q.7 15.1 .7 13.9V5.8Q.7 4.6 1.9 4.6Z" fill="#fff" stroke="#41abf9" stroke-width="1.3"/><rect x="1.4" y="5.6" width="5.4" height="8.8" fill="#cde8fd"/><path d="M9.3 12.9V8.7Q9.3 7.8 10.2 7.8H11.4Q12.3 7.8 12.3 8.7V12.9" fill="none" stroke="#2496f8" stroke-width="1.75"/></svg></div><span class="t" style="left:81.2px;top:269.6px;font-size:13.1px;font-weight:500;color:#222">솔루션사업부문</span>
<div class="abs" style="left:60.7px;top:298.1px"><svg width="5.7" height="9.4" viewBox="0 0 5 9"><path d="M.6 .6L4.4 4.5L.6 8.4" fill="none" stroke="#5a5a5a" stroke-width="1.0"/></svg></div><div class="abs" style="left:72.0px;top:293.8px"><svg width="16" height="15.4" viewBox="0 0 16 16" preserveAspectRatio="none"><path d="M1.9 .8H5.4Q6 .8 6.4 1.3L7.3 2.6H14.1Q15.3 2.6 15.3 3.8V13.9Q15.3 15.1 14.1 15.1H1.9Q.7 15.1 .7 13.9V2Q.7 .8 1.9 .8Z" fill="#b2dcfc" stroke="#5ab7f9" stroke-width="1.25"/><path d="M6.8 3.4H13.9Q14.6 3.4 14.6 4.1V13.7Q14.6 14.4 13.9 14.4H6.8Z" fill="#98cffb"/><path d="M9.3 12.5V7.9Q9.3 7 10.2 7H11.4Q12.3 7 12.3 7.9V12.5" fill="none" stroke="#2496f8" stroke-width="1.75"/></svg></div><span class="t" style="left:93.1px;top:296.0px;font-size:13.1px;font-weight:500;color:#222">솔루션구축센터</span>
<div class="abs" style="left:58.8px;top:326.3px"><svg width="9.4" height="5.7" viewBox="0 0 9 5"><path d="M.6 .6L4.5 4.4L8.4 .6" fill="none" stroke="#5a5a5a" stroke-width="1.0"/></svg></div><div class="abs" style="left:72.0px;top:320.2px"><svg width="16" height="15.4" viewBox="0 0 16 16" preserveAspectRatio="none"><path d="M.7 5V2Q.7 .8 1.9 .8H5.4Q6 .8 6.4 1.3L7.3 2.6H12.6Q13.8 2.6 13.8 3.8V5" fill="#fff" stroke="#4db1f9" stroke-width="1.25"/><path d="M1.9 4.6H14.1Q15.3 4.6 15.3 5.8V13.9Q15.3 15.1 14.1 15.1H1.9Q.7 15.1 .7 13.9V5.8Q.7 4.6 1.9 4.6Z" fill="#fff" stroke="#41abf9" stroke-width="1.3"/><rect x="1.4" y="5.6" width="5.4" height="8.8" fill="#cde8fd"/><path d="M9.3 12.9V8.7Q9.3 7.8 10.2 7.8H11.4Q12.3 7.8 12.3 8.7V12.9" fill="none" stroke="#2496f8" stroke-width="1.75"/></svg></div><span class="t" style="left:93.1px;top:322.4px;font-size:13.1px;font-weight:500;color:#222">솔루션개발본부</span>
<div class="abs" style="left:72.6px;top:350.9px"><svg width="5.7" height="9.4" viewBox="0 0 5 9"><path d="M.6 .6L4.4 4.5L.6 8.4" fill="none" stroke="#5a5a5a" stroke-width="1.0"/></svg></div><div class="abs" style="left:83.9px;top:346.6px"><svg width="16" height="15.4" viewBox="0 0 16 16" preserveAspectRatio="none"><path d="M1.9 .8H5.4Q6 .8 6.4 1.3L7.3 2.6H14.1Q15.3 2.6 15.3 3.8V13.9Q15.3 15.1 14.1 15.1H1.9Q.7 15.1 .7 13.9V2Q.7 .8 1.9 .8Z" fill="#b2dcfc" stroke="#5ab7f9" stroke-width="1.25"/><path d="M6.8 3.4H13.9Q14.6 3.4 14.6 4.1V13.7Q14.6 14.4 13.9 14.4H6.8Z" fill="#98cffb"/><path d="M9.3 12.5V7.9Q9.3 7 10.2 7H11.4Q12.3 7 12.3 7.9V12.5" fill="none" stroke="#2496f8" stroke-width="1.75"/></svg></div><span class="t" style="left:105.0px;top:348.9px;font-size:13.1px;font-weight:500;color:#222">개발1센터</span>
</div>
</body>
</html>
